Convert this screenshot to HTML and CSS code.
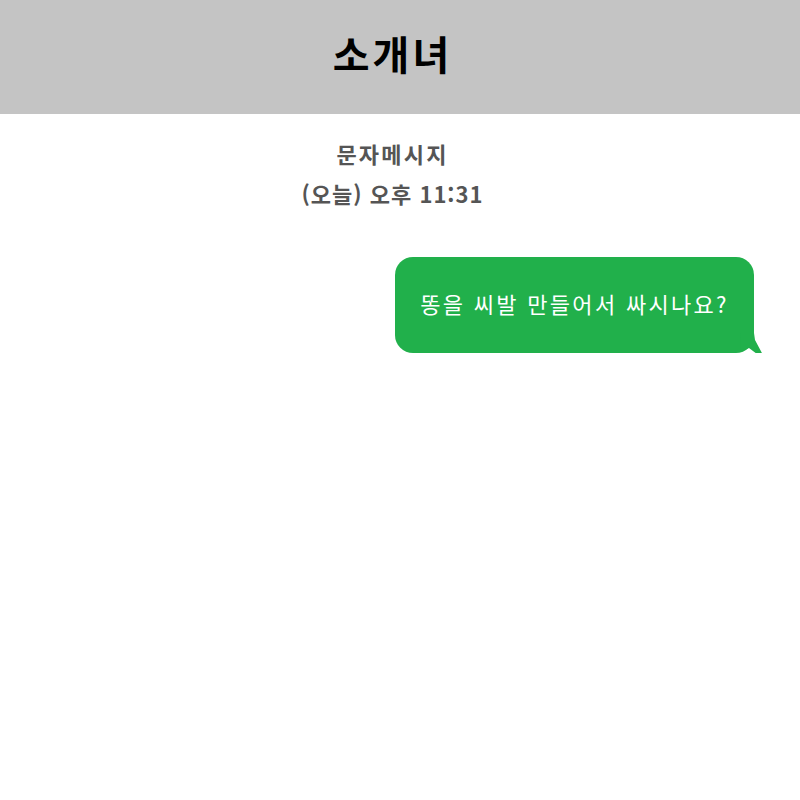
FILE: index.html
```html
<!DOCTYPE html>
<html lang="ko">
<head>
<meta charset="utf-8">
<link rel="stylesheet" href="styles.css">
</head>
<body>
<header class="top">
  <h1 class="title">소개녀</h1>
</header>
<div class="info">
  <div class="line kind">문자메시지</div>
  <div class="line">(오늘) 오후 11:31</div>
</div>
<div class="chat">
  <div class="bubble">
    <span class="msg">똥을 씨발 만들어서 싸시나요?</span>
    <svg class="tail" width="30" height="24" viewBox="0 0 30 24">
      <polygon points="6,0 19,0 20,7 28,22 22,21 14,15 5,19" fill="#21b04b"/>
    </svg>
  </div>
</div>
</body>
</html>
```
FILE: styles.css
```css
html, body {
  margin: 0;
  padding: 0;
  background: #ffffff;
  font-family: "Noto Sans CJK KR", "Noto Sans", sans-serif;
}
.top {
  box-sizing: border-box;
  height: 114px;
  background: #c4c4c4;
  display: flex;
  align-items: center;
  justify-content: center;
  padding-right: 15px;
  padding-bottom: 8px;
}
.title {
  margin: 0;
  font-size: 40px;
  font-weight: 700;
  color: #000;
  line-height: 1;
  letter-spacing: 3px;
}
.info {
  margin-top: 19px;
  padding-right: 15px;
  text-align: center;
  color: #555555;
  font-weight: 700;
  font-size: 22px;
}
.line {
  line-height: 40px;
  letter-spacing: 1px;
}
.kind {
  letter-spacing: 2.2px;
}
.chat {
  margin-top: 44px;
  display: flex;
  justify-content: flex-end;
  padding-right: 46px;
}
.bubble {
  position: relative;
  width: 359px;
  height: 96px;
  box-sizing: border-box;
  padding-bottom: 5px;
  background: #21b04b;
  border-radius: 18px;
  display: flex;
  align-items: center;
  justify-content: center;
  color: #ffffff;
  font-size: 22px;
}
.msg {
  line-height: 1;
  letter-spacing: 2.3px;
}
.tail {
  position: absolute;
  left: 340px;
  top: 76px;
}
```
